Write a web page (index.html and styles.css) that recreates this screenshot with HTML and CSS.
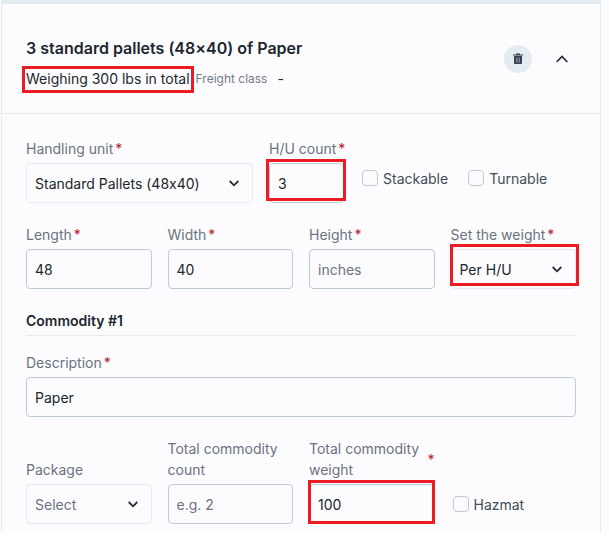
FILE: index.html
```html
<!DOCTYPE html>
<html lang="en">
<head>
<meta charset="utf-8">
<meta name="viewport" content="width=device-width, initial-scale=1">
<title>Shipment items</title>
<link rel="stylesheet" href="styles.css">
</head>
<body>
<main class="page">
  <section class="card">
    <header class="card-header">
      <div class="summary">
        <h2 class="title">3 standard pallets (48×40) of Paper</h2>
        <p class="subtitle">
          <span class="weighing">Weighing 300 lbs in total<span class="mark mark-weighing"></span></span>
          <span class="freight">Freight class</span>
          <span class="freight-value">-</span>
        </p>
      </div>
      <button class="icon-button delete" type="button" aria-label="Delete">
        <svg width="10" height="12" viewBox="0 0 10 12"><path d="M3 .5h4v1h3v1H0v-1h3z" fill="#36434e"/><path d="M1 3h8v7q0 1-1 1H2q-1 0-1-1z" fill="#36434e"/><path d="M3.500 4.500v5M5 4.500v5M6.500 4.500v5" stroke="#8b969f" stroke-width=".8"/></svg>
      </button>
      <button class="icon-button" type="button" aria-label="Collapse">
        <svg width="12" height="8" viewBox="0 0 12 8"><path d="M.7 7 6 1.500 11.300 7" fill="none" stroke="#252d35" stroke-width="1.700"/></svg>
      </button>
    </header>
    <form class="card-body">
      <div class="row row-unit">
        <div class="field">
          <label class="label" for="unit"><span>Handling unit</span><span class="star">*</span></label>
          <div class="control">
            <select class="input select" id="unit"><option>Standard Pallets (48x40)</option></select>
            <svg class="chevron" width="10" height="7" viewBox="0 0 10 7"><path d="M.7 1 5 5.300 9.300 1" fill="none" stroke="#252d35" stroke-width="1.800"/></svg>
          </div>
        </div>
        <div class="field">
          <label class="label" for="count"><span>H/U count</span><span class="star">*</span></label>
          <div class="control">
            <input class="input" id="count" type="text" value="3">
            <span class="mark mark-count"></span>
          </div>
        </div>
        <div class="checks">
          <label class="check"><input class="box" type="checkbox">Stackable</label>
          <label class="check"><input class="box" type="checkbox">Turnable</label>
        </div>
      </div>
      <div class="row">
        <div class="field">
          <label class="label" for="length"><span>Length</span><span class="star">*</span></label>
          <input class="input" id="length" type="text" value="48">
        </div>
        <div class="field">
          <label class="label" for="width"><span>Width</span><span class="star">*</span></label>
          <input class="input" id="width" type="text" value="40">
        </div>
        <div class="field">
          <label class="label" for="height"><span>Height</span><span class="star">*</span></label>
          <input class="input" id="height" type="text" placeholder="inches">
        </div>
        <div class="field">
          <label class="label" for="basis"><span>Set the weight</span><span class="star">*</span></label>
          <div class="control">
            <select class="input select" id="basis"><option>Per H/U</option></select>
            <svg class="chevron" width="10" height="7" viewBox="0 0 10 7"><path d="M.7 1 5 5.300 9.300 1" fill="none" stroke="#252d35" stroke-width="1.800"/></svg>
            <span class="mark mark-basis"></span>
          </div>
        </div>
      </div>
      <div class="commodity">
        <h3 class="commodity-title">Commodity #1</h3>
        <div class="field">
          <label class="label" for="description"><span>Description</span><span class="star">*</span></label>
          <input class="input" id="description" type="text" value="Paper">
        </div>
      </div>
      <div class="row">
        <div class="field">
          <label class="label" for="package"><span>Package</span></label>
          <div class="control">
            <select class="input select empty" id="package"><option>Select</option></select>
            <svg class="chevron" width="10" height="7" viewBox="0 0 10 7"><path d="M.7 1 5 5.300 9.300 1" fill="none" stroke="#252d35" stroke-width="1.800"/></svg>
          </div>
        </div>
        <div class="field">
          <label class="label" for="total-count"><span>Total commodity count</span></label>
          <input class="input" id="total-count" type="text" placeholder="e.g. 2">
        </div>
        <div class="field">
          <label class="label" for="total-weight"><span class="wrap">Total commodity weight</span><span class="star">*</span></label>
          <div class="control">
            <input class="input" id="total-weight" type="text" value="100">
            <span class="mark mark-weight"></span>
          </div>
        </div>
        <label class="check hazmat"><input class="box" type="checkbox">Hazmat</label>
      </div>
    </form>
  </section>
</main>
</body>
</html>
```
FILE: styles.css
```css
* {
  box-sizing: border-box;
}

body {
  margin: 0;
  background: #fff;
  color: #20262d;
  font: 14px/21px Inter, "Liberation Sans", sans-serif;
  font-variant-ligatures: no-contextual;
}

.page {
  padding: 0 8px 0 1px;
  background: #fcfcfe;
}

.card {
  border: solid #e4ebf1;
  border-width: 4px 1px 0;
}

.card-header {
  display: flex;
  align-items: center;
  gap: 16px;
  min-height: 110px;
  padding: 0 24px;
  border-bottom: 1px solid #e6eaed;
}

.summary {
  flex: 1;
  padding-top: 8px;
}

.title {
  margin: 0 0 8px;
  font-size: 16px;
  line-height: 24px;
  font-weight: 600;
}

.subtitle {
  display: flex;
  margin: 0;
}

.weighing {
  position: relative;
  margin-right: 6px;
}

.freight {
  margin-right: 10px;
  color: #747b86;
  font-size: 12px;
}

.icon-button {
  display: flex;
  align-items: center;
  justify-content: center;
  width: 28px;
  height: 28px;
  padding: 0;
  border: 0;
  border-radius: 50%;
  background: none;
}

.delete {
  background: #e4ebf1;
}

.card-body {
  display: flex;
  flex-direction: column;
  gap: 21px;
  padding: 24px 24px 9px;
}

.row {
  display: grid;
  grid-template-columns: repeat(4, minmax(0, 1fr));
  align-items: end;
  gap: 16px;
}

.row-unit {
  grid-template-columns: minmax(0, 227fr) minmax(0, 75fr) minmax(0, 216fr);
}

.row-unit .label {
  white-space: nowrap;
}

.label {
  display: flex;
  align-items: center;
  gap: 2px;
  margin-bottom: 4px;
  color: #6b727e;
}

.wrap {
  flex: 0 1 120px;
}

.star {
  color: #b3202c;
}

.control {
  position: relative;
}

.input {
  display: block;
  width: 100%;
  height: 40px;
  padding: 0 8px;
  border: 1px solid #bdcbd7;
  border-radius: 4px;
  background: transparent;
  color: #20262d;
  font: inherit;
  font-variant-ligatures: no-contextual;
}

.input::placeholder {
  color: #6b727e;
  opacity: 1;
}

.select {
  appearance: none;
  border-color: #e4ebf1;
}

.empty {
  color: #6b727e;
}

.chevron {
  position: absolute;
  top: 17px;
  right: 14px;
  pointer-events: none;
}

.checks {
  display: flex;
  gap: 20px;
  padding: 0 0 5px 2px;
}

.check {
  display: flex;
  align-items: center;
  gap: 5px;
  height: 40px;
  color: #434c57;
}

.hazmat {
  padding-left: 2px;
}

.box {
  appearance: none;
  width: 16px;
  height: 16px;
  margin: 0;
  border: 1px solid #bdcbd7;
  border-radius: 4px;
}

.commodity-title {
  margin: 0 0 16px;
  padding-bottom: 4px;
  border-bottom: 1px solid #e6eaed;
  font-size: 14px;
  line-height: 21px;
  font-weight: 600;
}

.mark {
  position: absolute;
  border: 3px solid #ed1c24;
  pointer-events: none;
}

.mark-weighing {
  inset: -2px -4px -4px;
}

.mark-count {
  inset: -4px -2px 2px -3px;
}

.mark-basis {
  inset: -5px -3px 3px -1px;
}

.mark-weight {
  inset: -4px 0 0 -1px;
}
```
